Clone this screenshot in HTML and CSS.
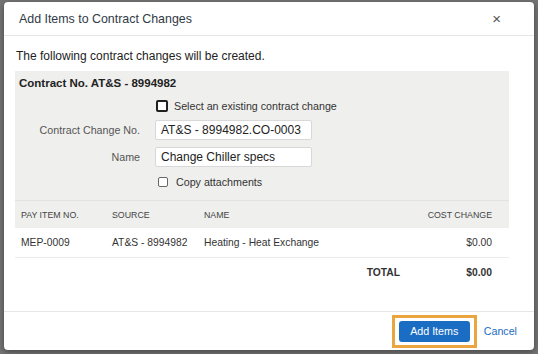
FILE: index.html
```html
<!DOCTYPE html>
<html>
<head>
    <title>Add Items to Contract Changes</title>
    <link rel="stylesheet" href="styles.css">
</head>
<body>
    <div class="modal">
        <div class="modal-header">
            <h1>Add Items to Contract Changes</h1>
            <span class="close">&times;</span>
        </div>
        <div class="modal-body">
            <p class="intro">The following contract changes will be created.</p>
            <div class="panel">
                <div class="panel-title">Contract No. AT&amp;S - 8994982</div>
                <div class="form-grid">
                    <span></span>
                    <label class="check"><span class="box focused"></span>Select an existing contract change</label>
                    <span class="field-label">Contract Change No.</span>
                    <div class="input">AT&amp;S - 8994982.CO-0003</div>
                    <span class="field-label">Name</span>
                    <div class="input">Change Chiller specs</div>
                    <span></span>
                    <label class="check"><span class="box"></span>Copy attachments</label>
                </div>
                <table class="items">
                    <thead>
                        <tr>
                            <th class="col-pay">PAY ITEM NO.</th>
                            <th class="col-source">SOURCE</th>
                            <th>NAME</th>
                            <th class="num col-cost">COST CHANGE</th>
                        </tr>
                    </thead>
                    <tbody>
                        <tr>
                            <td>MEP-0009</td>
                            <td>AT&amp;S - 8994982</td>
                            <td>Heating - Heat Exchange</td>
                            <td class="num">$0.00</td>
                        </tr>
                        <tr class="total-row">
                            <td></td>
                            <td></td>
                            <td class="total-label">TOTAL</td>
                            <td class="num">$0.00</td>
                        </tr>
                    </tbody>
                </table>
            </div>
        </div>
        <div class="modal-footer">
            <div class="highlight">
                <button class="button">Add Items</button>
            </div>
            <a class="cancel" href="#">Cancel</a>
        </div>
    </div>
</body>
</html>
```

FILE: styles.css
```css
body {
    margin: 0;
    width: 538px;
    height: 354px;
    overflow: hidden;
    background-color: #747474;
    font-family: "Liberation Sans", Arial, sans-serif;
    position: relative;
}

.modal {
    position: absolute;
    left: 4px;
    top: 2px;
    width: 530px;
    height: 348px;
    background-color: white;
    border-radius: 4px;
    box-shadow: 0 2px 6px rgba(0, 0, 0, 0.4);
    display: flex;
    flex-direction: column;
}

.modal-header {
    height: 33px;
    border-bottom: 1px solid #e6e6e6;
    display: flex;
    align-items: center;
    justify-content: space-between;
    padding: 0 33px 0 15px;
}

.modal-header h1 {
    margin: 0;
    font-size: 12.4px;
    font-weight: normal;
    color: #2f3a46;
}

.close {
    font-size: 15px;
    color: #555;
    line-height: 1;
}

.modal-body {
    flex: 1;
    padding: 0 25px 0 11px;
}

.intro {
    margin: 12px 0 0 1px;
    font-size: 12px;
    color: #222;
    line-height: 16px;
}

.panel {
    margin-top: 7px;
    background-color: #efefed;
}

.panel-title {
    padding: 5px 4px 0;
    font-size: 11.5px;
    font-weight: bold;
    color: #222;
    line-height: 14px;
}

.form-grid {
    display: grid;
    grid-template-columns: 125px 157px;
    column-gap: 15px;
    row-gap: 7px;
    align-items: center;
    margin-top: 8px;
}

.field-label {
    text-align: right;
    font-size: 10.7px;
    color: #555;
}

.check {
    display: flex;
    align-items: center;
    gap: 6px;
    font-size: 10.7px;
    color: #333;
    height: 15px;
    white-space: nowrap;
}

.box {
    flex: none;
    width: 8px;
    height: 8px;
    border: 1px solid #666;
    border-radius: 2px;
    background-color: white;
    margin-left: 3px;
    margin-right: 2px;
}

.focused {
    width: 8px;
    height: 8px;
    border: 2px solid #1f1f1f;
    margin-left: 1px;
    margin-right: 0;
}

.input {
    height: 18px;
    line-height: 18px;
    border: 1px solid #d8d8d8;
    border-radius: 2px;
    background-color: white;
    padding: 0 5px;
    font-size: 12px;
    color: #222;
}

.items {
    width: 100%;
    border-collapse: collapse;
    margin-top: 11px;
    font-size: 10.3px;
}

.items th {
    height: 27px;
    border-top: 1px solid #e2e2e2;
    text-align: left;
    font-weight: normal;
    font-size: 8.8px;
    color: #444;
    padding: 0 6px;
    white-space: nowrap;
}

.items td {
    background-color: white;
    height: 29px;
    padding: 0 6px;
    color: #333;
    border-bottom: 1px solid #ececec;
    white-space: nowrap;
}

.items .col-pay {
    width: 79px;
}

.items .col-source {
    width: 80px;
}

.items .col-cost {
    width: 73px;
}

.items .num {
    text-align: right;
    padding-right: 17px;
}

.items .total-row td {
    border-bottom: none;
    font-weight: bold;
    height: 28px;
}

.items .total-label {
    text-align: right;
    padding-right: 13px;
}

.modal-footer {
    height: 38px;
    border-top: 1px solid #e6e6e6;
    display: flex;
    align-items: center;
    justify-content: flex-end;
    padding-right: 17px;
}

.highlight {
    border: 3px solid #eaa53f;
    padding: 3px 4px;
    margin-right: 7px;
}

.button {
    background-color: #1a6dc2;
    color: white;
    border: none;
    border-radius: 3px;
    width: 71px;
    height: 21px;
    font-family: "Liberation Sans", Arial, sans-serif;
    font-size: 10.7px;
    display: block;
}

.cancel {
    color: #1a6dc2;
    font-size: 10.7px;
    text-decoration: none;
}
```
